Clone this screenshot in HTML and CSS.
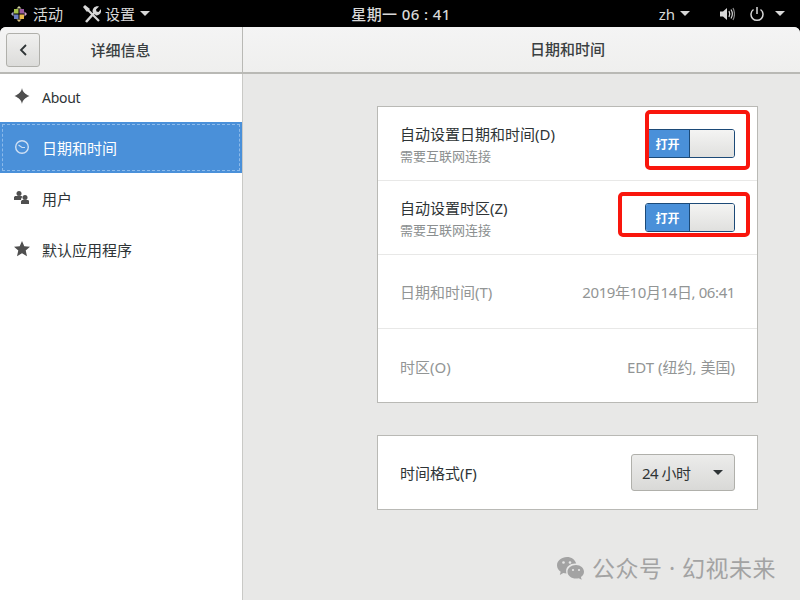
FILE: index.html
```html
<!DOCTYPE html>
<html lang="zh">
<head>
<meta charset="utf-8">
<title>日期和时间</title>
<link rel="stylesheet" href="styles.css">
</head>
<body>
<div class="topbar">
  <div class="tb-left">
    <span class="tb-item activities">
      <svg class="logo" width="16" height="16" viewBox="0 0 16 16"><path fill="#cfcfa0" d="M8 0l2.500 2.500h-5z"/><path fill="#d9a8d0" d="M16 8l-2.500 2.500v-5z"/><path fill="#d8c080" d="M8 16l-2.500-2.500h5z"/><path fill="#a8a8c8" d="M0 8l2.500-2.500v5z"/><rect x="3" y="3" width="4.500" height="4.500" fill="#a6c24c"/><rect x="8.500" y="3" width="4.500" height="4.500" fill="#9a5ca0"/><rect x="8.500" y="8.500" width="4.500" height="4.500" fill="#e8b84a"/><rect x="3" y="8.500" width="4.500" height="4.500" fill="#6a7cc0"/></svg>
      <span>活动</span>
    </span>
    <span class="tb-item app">
      <svg width="18" height="18" viewBox="0 0 18 18"><path fill="none" stroke="#d8d8d8" stroke-width="2.600" d="M3 17L12 7"/><path fill="#d8d8d8" d="M9.500 6.500C9.500 3 12.500.500 16 1.500l-3 3 .5 2 2 .5 2.500-3c1 3.500-1.500 6.500-5 6.500z"/><path fill="none" stroke="#d8d8d8" stroke-width="2.200" d="M4 4l12 12"/><path fill="#d8d8d8" d="M0 2l2-2 5 4-3 3z"/></svg>
      <span>设置</span><span class="caret caret-app"></span>
    </span>
  </div>
  <div class="clock">星期一 06 : 41</div>
  <div class="tb-right">
    <span class="tb-lang">zh<span class="caret"></span></span>
    <svg class="vol" width="16" height="16" viewBox="0 0 16 16"><path fill="#d8d8d8" d="M1 5.500h3l4-3.500v12l-4-3.500H1z"/><path fill="none" stroke="#d8d8d8" stroke-width="1.200" d="M10 5c1 2 1 4 0 6M12 3.500c1.800 3 1.800 6 0 9"/><path fill="none" stroke="#888" stroke-width="1.200" d="M14 2c2 4 2 8 0 12"/></svg>
    <svg class="pow" width="16" height="16" viewBox="0 0 16 16"><path fill="none" stroke="#d8d8d8" stroke-width="1.500" d="M4.500 3.500a6 6 0 1 0 7 0M8 1v7"/></svg>
    <span class="caret"></span>
  </div>
</div>
<div class="window">
  <div class="header">
    <div class="hd-left">
      <button class="back"><svg width="8" height="12" viewBox="0 0 8 12"><path fill="none" stroke="#2e3436" stroke-width="1.800" d="M7 1L2 6l5 5"/></svg></button>
      <div class="hd-title hd-title-left">详细信息</div>
    </div>
    <div class="hd-title hd-title-right">日期和时间</div>
  </div>
  <div class="body">
    <nav class="sidebar">
      <div class="nav-row">
        <svg class="nav-icon" width="16" height="16" viewBox="0 0 16 16"><path fill="#4f4f4f" d="M8 0c.6 3.800 2.400 5.700 7.500 8-5.100 2.300-6.900 4.200-7.500 8-.6-3.800-2.400-5.700-7.500-8C5.600 5.700 7.400 3.800 8 0z"/><circle cx="8" cy="8" r="3.400" fill="#4f4f4f"/></svg>
        <span class="nav-about">About</span>
      </div>
      <div class="nav-row selected">
        <svg class="nav-icon" width="16" height="16" viewBox="0 0 16 16"><circle cx="8" cy="8" r="6.300" fill="none" stroke="#cfe0f4" stroke-width="1.400"/><path fill="none" stroke="#cfe0f4" stroke-width="1.200" d="M4.500 6l3.500 2.500h3"/></svg>
        <span>日期和时间</span>
      </div>
      <div class="nav-row">
        <svg class="nav-icon" width="16" height="16" viewBox="0 0 16 16"><circle cx="5" cy="3.500" r="2.500" fill="#4f4f4f"/><path fill="#4f4f4f" d="M0 7.500c0-1 1-1.500 2-1.500h5c.8 0 1.300.3 1.500 1-1 .5-1.500 1.500-1.500 3H0z"/><circle cx="11" cy="7.500" r="2.500" fill="#4f4f4f"/><path fill="#4f4f4f" d="M7 11.500c0-1 1-1.500 2-1.500h4.500c1 0 1.500.5 1.500 1.500V14H7z"/></svg>
        <span>用户</span>
      </div>
      <div class="nav-row">
        <svg class="nav-icon" width="16" height="16" viewBox="0 0 16 16"><path fill="#4f4f4f" d="M8 0l2.300 5.200 5.700.6-4.300 3.800L13 15.200 8 12.300l-5 2.900 1.300-5.600L0 5.800l5.700-.6z"/></svg>
        <span>默认应用程序</span>
      </div>
    </nav>
    <main class="content">
      <section class="panel panel-main">
        <div class="row">
          <div class="label"><div>自动设置日期和时间(D)</div><div class="sub">需要互联网连接</div></div>
          <div class="switch"><span class="sw-on">打开</span><span class="sw-knob"></span></div>
        </div>
        <div class="row">
          <div class="label"><div>自动设置时区(Z)</div><div class="sub">需要互联网连接</div></div>
          <div class="switch"><span class="sw-on">打开</span><span class="sw-knob"></span></div>
        </div>
        <div class="row dim"><div>日期和时间(T)</div><div class="datetime">2019年10月14日, 06:41</div></div>
        <div class="row dim"><div>时区(O)</div><div>EDT (纽约, 美国)</div></div>
      </section>
      <section class="panel panel-format">
        <div class="row row-format">
          <div>时间格式(F)</div>
          <div class="combo"><span class="combo-text">24 小时</span><span class="combo-caret"></span></div>
        </div>
      </section>
    </main>
  </div>
</div>
<div class="mark mark-1"></div>
<div class="mark mark-2"></div>
<div class="watermark">
  <svg width="31" height="25" viewBox="0 0 31 25"><path fill="#a3a3a3" d="M11 1C5.500 1 1 4.700 1 9.300c0 2.600 1.500 5 3.700 6.400L3.800 19l3.500-1.900c1.100.3 2 .5 3.200.5-.3-1-.4-1.700-.4-2.500 0-4.300 4-7.600 9-7.600h1.100C19.200 3.700 15.400 1 11 1z"/><path fill="#a3a3a3" d="M20 9c-4.800 0-8.500 3-8.500 6.800s3.700 6.800 8.500 6.800c1 0 1.800-.2 2.700-.4l3 1.600-.8-2.800c1.900-1.200 3.100-3.100 3.100-5.200C28 12 24.600 9 20 9z"/><circle cx="7.500" cy="6.500" r="1.300" fill="#e6e6e5"/><circle cx="14" cy="6.500" r="1.300" fill="#e6e6e5"/><circle cx="17" cy="14" r="1.100" fill="#e6e6e5"/><circle cx="23" cy="14" r="1.100" fill="#e6e6e5"/></svg>
  <span>公众号 · 幻视未来</span>
</div>
</body>
</html>
```

FILE: styles.css
```css
* { box-sizing: border-box; }
html, body { margin: 0; height: 100%; }
body {
  width: 800px;
  height: 600px;
  overflow: hidden;
  position: relative;
  background: #000;
  font-family: "Noto Sans", "Noto Sans CJK SC", sans-serif;
  font-size: 15px;
  color: #2e3436;
}
.topbar {
  height: 27px;
  background: #000;
  color: #d8d8d8;
  display: grid;
  grid-template-columns: 1fr auto 1fr;
  align-items: center;
  font-size: 15px;
}
.tb-left { display: flex; align-items: center; padding-left: 11px; gap: 20px; }
.tb-item { display: flex; align-items: center; gap: 6px; }
.app { gap: 4px; }
.caret {
  display: inline-block;
  width: 0; height: 0;
  border-left: 5px solid transparent;
  border-right: 5px solid transparent;
  border-top: 5px solid #d8d8d8;
  margin-left: 5px;
}
.caret-app { margin-left: 1px; }
.clock {
  font-weight: 500;
  padding-left: 2px;
  letter-spacing: .4px;
}
.tb-right { display: flex; align-items: center; justify-content: flex-end; padding-right: 15px; }
.tb-lang { margin-right: 29px; display: flex; align-items: center; }
.vol { margin-right: 14px; }
.pow { margin-right: 5px; }
.window {
  height: 573px;
  background: #e8e8e7;
  border-radius: 6px 6px 0 0;
  overflow: hidden;
  display: flex;
  flex-direction: column;
}
.header {
  height: 47px;
  display: flex;
  background: linear-gradient(#f4f4f4, #efefee);
  border-bottom: 2px solid #b9b9b5;
}
.hd-left {
  width: 243px;
  flex: none;
  border-right: 1px solid #b9b9b5;
  display: flex;
  align-items: center;
  padding-left: 6px;
}
.back {
  width: 34px; height: 34px;
  padding: 0;
  border: 1px solid #b0b0ab;
  border-radius: 3px;
  background: linear-gradient(#f0f0ef, #dcdcda);
  display: flex; align-items: center; justify-content: center;
}
.hd-title { font-weight: 500; text-align: center; color: #3a3f41; }
.hd-title-left { flex: 1; padding-right: 41px; }
.hd-title-right { flex: 1; padding-left: 92px; line-height: 45px; }
.body { flex: 1; display: flex; }
.sidebar {
  width: 243px;
  flex: none;
  background: #fff;
  border-right: 1px solid #c9c9c6;
}
.nav-row {
  height: 51px;
  display: flex;
  align-items: center;
  padding-left: 14px;
  gap: 12px;
  color: #2e3436;
}
.nav-row:first-child { height: 48px; padding-bottom: 2px; }
.nav-about { font-size: 14px; letter-spacing: -.3px; }
.nav-icon { flex: none; margin-top: -2px; }
.selected {
  background: #4a90d9;
  color: #fff;
  outline: 1px dashed #8cbaea;
  outline-offset: -3px;
}
.content { flex: 1; padding: 32px 42px 0 134px; }
.panel { background: #fff; border: 1px solid #b9b9b5; }
.panel-main { height: 297px; }
.panel-format { height: 75px; margin-top: 32px; }
.row {
  height: 74px;
  padding: 0 22px;
  display: flex;
  align-items: center;
  justify-content: space-between;
  border-bottom: 1px solid #e8e8e7;
}
.panel-main .row:last-child, .row-format { border-bottom: 0; }
.row-format { height: 73px; }
.sub { font-size: 13px; color: #8b8f90; margin-top: 3px; line-height: 18px; }
.label { line-height: 20px; padding-top: 2px; }
.dim { color: #929595; }
.datetime { letter-spacing: -.4px; }
.switch {
  width: 90px; height: 29px;
  display: flex;
  border: 1px solid #1c4a78;
  border-radius: 3px;
  overflow: hidden;
}
.sw-on {
  width: 44px;
  background: #4a90d9;
  color: #fff;
  font-size: 12px;
  font-weight: 700;
  display: flex; align-items: center; justify-content: center;
  border-right: 1px solid #1c4a78;
}
.sw-knob { flex: 1; background: linear-gradient(#f4f4f3, #e0e0de); }
.combo {
  width: 104px; height: 37px;
  border: 1px solid #b0b0ab;
  border-radius: 3px;
  background: linear-gradient(#ececeb, #d9d9d7);
  display: flex; align-items: center; justify-content: space-between;
  padding: 0 11px 0 10px;
}
.combo-text { letter-spacing: -.5px; }
.combo-caret {
  width: 0; height: 0;
  border-left: 5px solid transparent;
  border-right: 5px solid transparent;
  border-top: 5px solid #2e3436;
}
.mark {
  position: absolute;
  border: 4px solid #f9160d;
  border-radius: 5px;
}
.mark-1 { left: 645px; top: 110px; width: 105px; height: 60px; }
.mark-2 { left: 618px; top: 192px; width: 132px; height: 45px; }
.watermark {
  position: absolute;
  left: 556px; top: 554px;
  display: flex; align-items: center; gap: 5px;
  color: #a3a3a3;
  font-size: 23px;
  line-height: 28px;
  letter-spacing: .5px;
}
```
